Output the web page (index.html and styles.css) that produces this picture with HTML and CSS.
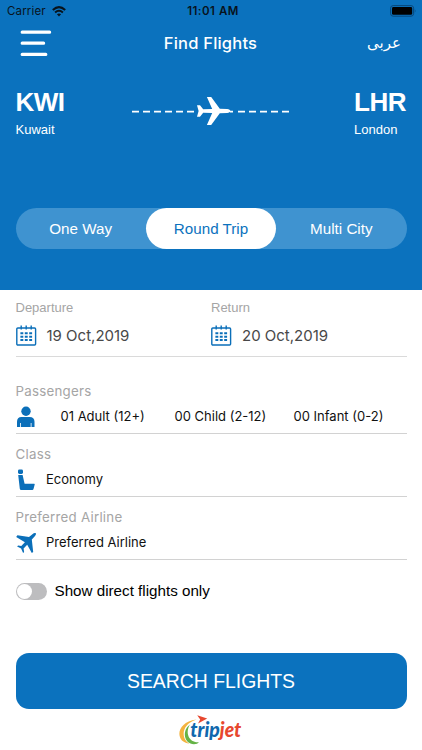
FILE: index.html
```html
<!DOCTYPE html>
<html lang="en">
<head>
<meta charset="utf-8">
<title>Find Flights</title>
<link rel="stylesheet" href="styles.css">
</head>
<body>
<svg class="defs" width="0" height="0" aria-hidden="true">
  <symbol id="calendar" viewBox="0 0 21 21">
    <rect x=".8" y="3" width="18.8" height="17" rx="1" fill="none" stroke="currentColor" stroke-width="1.4"/>
    <path d="M5.2 .5v4M10.2 .5v4M15.2 .5v4" stroke="currentColor" stroke-width="1.4"/>
    <path d="M4.4 8.3h12M4.4 11.7h12M4.4 15.1h12" stroke="currentColor" stroke-width="2" stroke-dasharray="2.9 1.5"/>
  </symbol>
</svg>
<main class="screen">
  <header class="hero">
    <div class="status">
      <div class="carrier">Carrier
        <svg width="14" height="11" viewBox="0 0 14 11"><g fill="none" stroke="#08131c" stroke-width="2"><path d="M.8 4Q7-1.8 13.2 4"/><path d="M3.1 6.5Q7 3 10.9 6.5"/></g><path d="M4.9 8.3Q7 6.5 9.1 8.3L7 10.5z" fill="#08131c"/></svg>
      </div>
      <div class="time">11:01 AM</div>
      <div class="battery"><svg width="27" height="12" viewBox="0 0 27 12"><rect x=".6" y=".6" width="23" height="10.6" rx="2.6" fill="none" stroke="#07477a" stroke-width="1"/><rect x="2" y="2" width="20.2" height="7.8" rx="1.4"/><path d="M24.8 4q1.5 1.9 0 3.8z" fill="#07477a"/></svg></div>
    </div>
    <nav class="nav">
      <svg width="32" height="27" viewBox="0 0 32 27" stroke="#fff" stroke-width="3.2" stroke-linecap="round"><path d="M2.2 2.2h27.4M2.2 13.2h21.4M2.2 24.4h23.6"/></svg>
      <h1>Find Flights</h1>
      <span class="lang" lang="ar">عربى</span>
    </nav>
    <section class="route">
      <div class="place"><strong>KWI</strong><span>Kuwait</span></div>
      <svg class="path" width="160" height="30" viewBox="0 0 160 30"><path d="M1 15.6h66M99 15.6h3M107 15.6h52" stroke="#fff" stroke-width="1.7" stroke-dasharray="7 4" fill="none"/><path d="M66 9.2h3l3.2 4 9-.2L75.9 1h4.3l8.6 11.8 7.3.2q3.2.4 3.2 2t-3.2 2l-7.3.2L80.2 29h-4.3l5.3-12-9-.2-3.2 4h-3l1.6-5.8z" fill="#fff"/></svg>
      <div class="place dest"><strong>LHR</strong><span>London</span></div>
    </section>
    <div class="tabs"><span>One Way</span><span class="active">Round Trip</span><span>Multi City</span></div>
  </header>
  <section class="form">
    <div class="dates">
      <div><label>Departure</label><p><svg width="21" height="21"><use href="#calendar"/></svg><span>19 Oct,2019</span></p></div>
      <div><label>Return</label><p><svg width="21" height="21"><use href="#calendar"/></svg><span>20 Oct,2019</span></p></div>
    </div>
    <div class="field passengers"><label>Passengers</label>
      <p><svg width="20" height="22" viewBox="0 0 20 22" fill="currentColor"><circle cx="10" cy="5.3" r="4.7"/><path d="M1 21v-5.2Q1 11 5.5 11h8q5 0 5 4.8V21h-3v-4h-.8v4H4.8v-4H4v4z"/></svg><span class="adult">01 Adult (12+)</span><span class="child">00 Child (2-12)</span><span class="infant">00 Infant (0-2)</span></p></div>
    <div class="field"><label>Class</label>
      <p><svg width="20" height="22" viewBox="0 0 20 22" fill="currentColor"><rect x="2" y=".6" width="5" height="4.4" rx="1.4"/><path d="M2.2 6h4.4l2 8.8h9.6q.7 0 .5.8L17.5 20q-.3 1-1.2 1H5.2q-1.2 0-1.4-1.2z"/></svg><span>Economy</span></p></div>
    <div class="field"><label>Preferred Airline</label>
      <p><svg width="20" height="22" viewBox="0 0 20 22" fill="currentColor"><path d="M19.6 1.1q1 1.3-.8 3.2l-3 3.3L17.2 20l-1.4 1-4.6-8.2-3.6 3.7.5 3.5-1 .9-2-4.4-4-2 1-1 3.2.4 3.6-3.6L.2 5l1.2-1.8L13 5l3.4-2.8Q18.4.4 19.6 1.1z"/></svg><span>Preferred Airline</span></p></div>
    <div class="direct"><i class="switch"></i><span>Show direct flights only</span></div>
    <button>SEARCH FLIGHTS</button>
    <svg class="logo" width="64" height="32" viewBox="0 0 64 32"><path d="M17.5 4.4C-4 7-4 27.5 10.5 28.6C2 24 1.5 9.5 17.5 4.4z" fill="#f3b33f"/><path d="M11 9.5C2.5 15.5 5 29 15 29.2q3.5 0 5-2C10.5 28.2 5.5 18 11 9.5z" fill="#65b346"/><path d="M18.2.2L28.2 3.5 19 8.5l2.2-4.1z" fill="#e7472f"/><text x="11.3" y="22.3" textLength="51" lengthAdjust="spacingAndGlyphs" fill="#1068ad">trip<tspan fill="#e7472f">jet</tspan></text></svg>
  </section>
</main>
</body>
</html>
```
FILE: styles.css
```css
* { box-sizing: border-box; }
body { margin: 0; background: #fff; font-family: "Liberation Sans", Arial, sans-serif; }
p, h1 { margin: 0; }
svg { display: block; flex: none; }
.defs { height: 0; overflow: hidden; }
.screen { width: 422px; height: 750px; overflow: hidden; color: #111; }
.hero { height: 289.5px; background: #0b72be; color: #fff; }
.status { height: 22px; display: grid; grid-template-columns: 1fr auto 1fr; align-items: center; padding: 0 5px 0 7px; color: #08131c; font: 11.5px/22px Inter, sans-serif; }
.carrier { display: flex; align-items: center; gap: 6px; letter-spacing: .15px; }
.time { font-weight: 600; letter-spacing: .5px; padding-left: 2px; }
.battery { justify-self: end; }
.nav { height: 42px; display: grid; grid-template-columns: 1fr auto 1fr; align-items: center; padding: 0 21px 0 20px; }
.nav h1 { font: 500 16.5px/24px Inter, sans-serif; letter-spacing: .2px; }
.lang { justify-self: end; font: 15px/24px "DejaVu Sans", sans-serif; }
.route { height: 144px; padding: 24px 15px 0 15px; display: flex; justify-content: space-between; }
.place { width: 53px; }
.place strong { display: block; font-size: 26px; line-height: 29px; letter-spacing: -.5px; padding-left: .5px; }
.place span { display: block; font-size: 13px; line-height: 17px; margin-top: 4px; padding-left: .5px; }
.dest span { padding-left: 0; }
.dest strong { padding-left: 0; }
.path { margin: 8px 0 0; }
.tabs { height: 41px; margin: 0 15.5px; border-radius: 21px; background: #3f93d0; display: grid; grid-template-columns: repeat(3, 1fr); font-size: 15.2px; line-height: 41px; text-align: center; }
.active { background: #fff; color: #0b72be; border-radius: 21px; }
.form { padding: 0 15.5px; display: flex; flex-direction: column; }
.form label { display: block; color: #a5a5a5; }
.form p { display: flex; align-items: center; color: #0b6fb9; }
.dates { height: 67.5px; padding-top: 10.5px; display: grid; grid-template-columns: 1fr 1fr; border-bottom: 1px solid #dadada; font-size: 13px; }
.dates label { line-height: 15px; }
.dates p { height: 41px; gap: 10px; }
.dates p span { color: #484848; font: 15px/20px Inter, sans-serif; }
.field { height: 63px; padding-top: 11px; border-bottom: 1px solid #d2d2d2; font: 13.3px/19px Inter, sans-serif; }
.field label { letter-spacing: .25px; }
.field p { height: 31px; gap: 10.5px; }
.field p span { color: #111; font-size: 13px; }
.passengers { height: 77px; padding-top: 25px; }
.passengers p { gap: 0; }
.adult { margin-left: 25px; width: 114px; }
.child { width: 119px; }
.direct { height: 73px; padding-top: 22px; display: flex; align-items: flex-start; gap: 8px; font-size: 15.2px; line-height: 18px; color: #000; }
.switch { width: 31px; height: 17px; border-radius: 9px; background: #bdbdbf; padding: 1px; margin-top: 1px; }
.switch::after { content: ""; display: block; width: 15px; height: 15px; border-radius: 50%; background: #fff; }
button { height: 56px; margin-top: 20px; border: 0; border-radius: 13px; background: #0b72be; color: #fff; font: 19.4px/56px "Liberation Sans", sans-serif; padding: 0; }
.logo { align-self: center; margin-top: 6px; font: italic 900 20px Lato, sans-serif; }
```
